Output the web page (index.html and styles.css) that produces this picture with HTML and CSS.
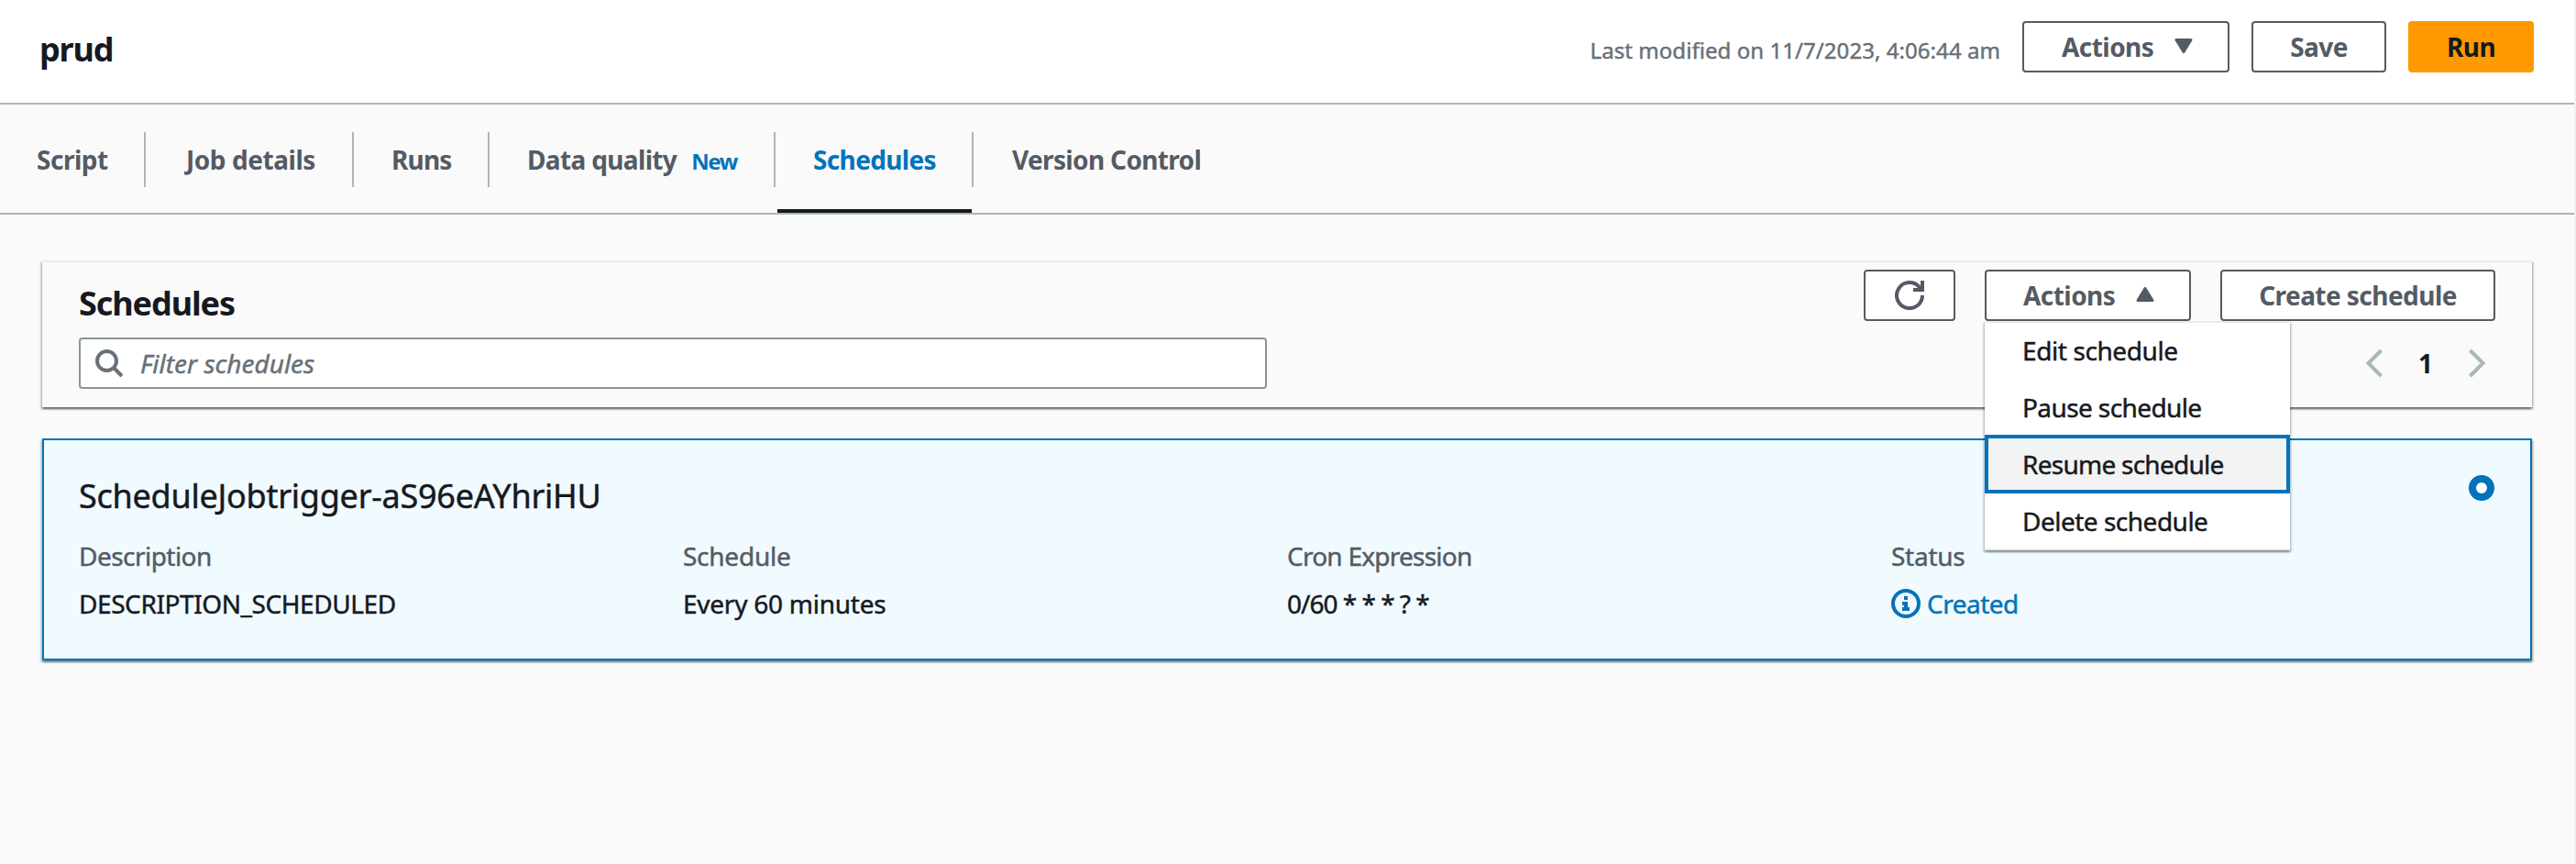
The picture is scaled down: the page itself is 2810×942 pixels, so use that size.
FILE: index.html
```
<!DOCTYPE html>
<html lang="en">
<head>
<meta charset="utf-8">
<title>prud - Schedules</title>
<link rel="stylesheet" href="styles.css">
</head>
<body>
<div class="page">
  <header class="header">
    <h1 class="job-name">prud</h1>
    <div class="header-actions">
      <span class="modified">Last modified on 11/7/2023, 4:06:44 am</span>
      <button class="btn btn-menu">Actions
        <svg class="caret" width="20" height="16" viewBox="0 0 20 16"><path d="M2 1.5H18L10 14.5Z" fill="currentColor" stroke="currentColor" stroke-width="3" stroke-linejoin="round"/></svg>
      </button>
      <button class="btn btn-save">Save</button>
      <button class="btn btn-primary">Run</button>
    </div>
  </header>

  <nav class="tabs">
    <a class="tab tab-script">Script</a>
    <a class="tab tab-details">Job details</a>
    <a class="tab tab-runs">Runs</a>
    <a class="tab tab-quality">Data quality<span class="new">New</span></a>
    <a class="tab tab-schedules active">Schedules</a>
    <a class="tab tab-version">Version Control</a>
  </nav>

  <main class="content">
    <section class="panel">
      <div class="panel-left">
        <h2 class="panel-title">Schedules</h2>
        <div class="search">
          <svg width="32" height="32" viewBox="0 0 32 32" fill="none" stroke="currentColor" stroke-width="4"><circle cx="13.5" cy="13.5" r="10.5"/><path d="M21 21L30 30"/></svg>
          <span>Filter schedules</span>
        </div>
      </div>
      <div class="panel-right">
        <div class="panel-buttons">
          <button class="btn btn-refresh" aria-label="Refresh">
            <svg width="32" height="32" viewBox="0 0 32 32" fill="none" stroke="currentColor" stroke-width="4"><path d="M30 16A14 14 0 1 1 26.5 6.8L29 10"/><path d="M30 0V10H20"/></svg>
          </button>
          <div class="menu-anchor">
            <button class="btn btn-menu">Actions
              <svg class="caret" width="20" height="16" viewBox="0 0 20 16"><path d="M10 1.5L18 14.5H2Z" fill="currentColor" stroke="currentColor" stroke-width="3" stroke-linejoin="round"/></svg>
            </button>
            <ul class="menu">
              <li class="menu-item edit">Edit schedule</li>
              <li class="menu-item">Pause schedule</li>
              <li class="menu-item focused">Resume schedule</li>
              <li class="menu-item">Delete schedule</li>
            </ul>
          </div>
          <button class="btn btn-create">Create schedule</button>
        </div>
        <div class="pager">
          <svg width="20" height="32" viewBox="0 0 20 32" fill="none" stroke="currentColor" stroke-width="4"><path d="M17.5 2L3.5 16L17.5 30"/></svg>
          <span class="page-number">1</span>
          <svg width="20" height="32" viewBox="0 0 20 32" fill="none" stroke="currentColor" stroke-width="4"><path d="M2.5 2L16.5 16L2.5 30"/></svg>
        </div>
      </div>
    </section>

    <section class="card">
      <div class="card-head">
        <h3 class="card-title">ScheduleJobtrigger-aS96eAYhriHU</h3>
        <span class="radio"></span>
      </div>
      <div class="fields">
        <div class="field"><div class="label label-description">Description</div><div class="value upper">DESCRIPTION_SCHEDULED</div></div>
        <div class="field"><div class="label">Schedule</div><div class="value">Every 60 minutes</div></div>
        <div class="field"><div class="label label-cron">Cron Expression</div><div class="value cron">0/60 * * * ? *</div></div>
        <div class="field"><div class="label">Status</div>
          <div class="value status">
            <svg width="32" height="32" viewBox="0 0 32 32"><circle cx="16" cy="16" r="14" fill="none" stroke="currentColor" stroke-width="4"/><path d="M14 8h4v4h-4zM12 14h6v6h2v4h-8v-4h2v-2h-2z" fill="currentColor"/></svg>
            <span>Created</span>
          </div>
        </div>
      </div>
    </section>
  </main>
</div>
</body>
</html>
```
FILE: styles.css
```
* { box-sizing: border-box; }
body {
  margin: 0;
  font-family: "Noto Sans", "Open Sans", sans-serif;
  font-size: 28px;
  color: #16191f;
  background: #fafafa;
}
h1, h2, h3, ul { margin: 0; padding: 0; }
svg { display: block; flex: none; }

.page {
  height: 942px;
  border-right: 2px solid #eff1f1;
}

/* Header */
.header {
  display: flex;
  justify-content: space-between;
  align-items: flex-start;
  height: 114px;
  padding: 23px 44px 0 43px;
  background: #fff;
  border-bottom: 2px solid #aab7b8;
}
.job-name {
  font-size: 36px;
  line-height: 61px;
  letter-spacing: -1.2px;
}
.header-actions { display: flex; }
.modified {
  margin-right: 24px;
  font-size: 24px;
  line-height: 63px;
  letter-spacing: 0.06px;
  color: #687078;
  white-space: nowrap;
}

/* Slightly thicker strokes for regular-weight text */
.modified, .search, .menu-item, .card-title, .label, .value {
  -webkit-text-stroke: 0.45px currentColor;
}

.btn {
  display: flex;
  align-items: center;
  justify-content: center;
  height: 56px;
  padding: 0;
  font: 700 28px/52px "Noto Sans", "Open Sans", sans-serif;
  letter-spacing: -0.55px;
  color: #545b64;
  background: #fff;
  border: 2px solid #545b64;
  border-radius: 4px;
}
.btn-menu {
  justify-content: space-between;
  width: 226px;
  padding: 0 38px 0 41px;
}
.btn-save { width: 147px; margin-left: 24px; }
.btn-primary {
  width: 137px;
  margin-left: 24px;
  color: #16191f;
  background: #f90;
  border-color: #f90;
}
.caret { position: relative; top: -1px; }

/* Tabs */
.tabs {
  display: flex;
  height: 120px;
  border-bottom: 2px solid #aab7b8;
}
.tab {
  position: relative;
  padding-left: 40px;
  font-weight: 700;
  line-height: 121px;
  letter-spacing: -0.65px;
  color: #545b64;
  white-space: nowrap;
}
.tab:not(:last-child)::after {
  content: "";
  position: absolute;
  right: 0;
  top: 30px;
  width: 2px;
  height: 60px;
  background: #aab7b8;
}
.tab-script { width: 159px; letter-spacing: -0.5px; }
.tab-details { width: 227px; padding-left: 44px; letter-spacing: -0.45px; }
.tab-runs { width: 148px; padding-left: 41px; letter-spacing: -0.8px; }
.tab-quality { width: 312px; padding-left: 41px; }
.tab-schedules { width: 216px; padding-left: 41px; }
.tab-version { padding-left: 42px; }
.new {
  margin-left: 16px;
  font-size: 24px;
  letter-spacing: -1.4px;
  color: #0073bb;
}
.active { color: #0073bb; }
.active::before {
  content: "";
  position: absolute;
  left: 2px;
  right: 2px;
  bottom: 0;
  height: 4px;
  background: #16191f;
}

/* Filter panel */
.content { padding: 50px 46px 0; }
.panel {
  display: flex;
  justify-content: space-between;
  height: 160px;
  padding: 8px 40px 20px;
  border-top: 2px solid #eaeded;
  box-shadow: 0 2px 2px rgba(0, 28, 36, 0.5), 2px 2px 2px rgba(0, 28, 36, 0.15), -2px 2px 2px rgba(0, 28, 36, 0.15);
}
.panel-title {
  padding-top: 13px;
  font-size: 36px;
  line-height: 48px;
  letter-spacing: -1.08px;
}
.search {
  display: flex;
  align-items: center;
  gap: 18px;
  width: 1296px;
  height: 56px;
  margin-top: 13px;
  padding-left: 15px;
  font-style: italic;
  line-height: 52px;
  color: #687078;
  background: #fff;
  border: 2px solid #879596;
  border-radius: 4px;
}
.panel-buttons { display: flex; }
.btn-refresh { width: 100px; margin-right: 32px; }
.btn-create { width: 300px; margin-left: 32px; }
.menu-anchor { position: relative; }
.menu-anchor .btn-menu { width: 225px; padding-left: 40px; }
.menu {
  position: absolute;
  top: 56px;
  left: 0;
  z-index: 2;
  width: 333px;
  height: 250px;
  list-style: none;
  background: #fff;
  border: solid #eaeded;
  border-width: 2px 0;
  box-shadow: 0 2px 2px rgba(0, 28, 36, 0.3), 2px 2px 2px rgba(0, 28, 36, 0.15), -2px 2px 2px rgba(0, 28, 36, 0.15);
}
.menu-item {
  height: 62px;
  padding-left: 41px;
  line-height: 61px;
  letter-spacing: -0.6px;
}
.menu-item.edit { letter-spacing: -0.4px; }
.menu-item.focused {
  height: 64px;
  margin: -2px 0 0;
  padding-left: 37px;
  line-height: 56px;
  letter-spacing: -0.74px;
  background: #f2f3f3;
  border: 4px solid #0073bb;
}
.menu-item:last-child { line-height: 60px; letter-spacing: -0.5px; }

.pager {
  display: flex;
  align-items: center;
  justify-content: flex-end;
  gap: 38px;
  height: 56px;
  margin-top: 18px;
  padding-right: 10px;
  color: #aab7b8;
}
.page-number {
  width: 16px;
  font-weight: 700;
  text-align: center;
  color: #16191f;
}

/* Schedule card */
.card {
  height: 242px;
  margin-top: 34px;
  padding: 38px 39px 0 38px;
  background: #f1faff;
  border: 2px solid #0073bb;
  box-shadow: 0 2px 2px rgba(0, 28, 36, 0.4), 2px 2px 2px rgba(0, 28, 36, 0.15), -2px 2px 2px rgba(0, 28, 36, 0.15);
}
.card-head {
  display: flex;
  justify-content: space-between;
}
.card-title {
  font-size: 36px;
  font-weight: 400;
  line-height: 45px;
  letter-spacing: -0.26px;
}
.radio {
  width: 28px;
  height: 28px;
  background: #fff;
  border: 8px solid #0073bb;
  border-radius: 50%;
}
.fields {
  display: grid;
  grid-template-columns: repeat(4, 659px);
  margin-top: 21px;
}
.label, .value { line-height: 44px; letter-spacing: -0.25px; }
.label { color: #545b64; }
.label-description { letter-spacing: -0.54px; }
.value { margin-top: 8px; }
.upper { letter-spacing: -0.42px; }
.label-cron { letter-spacing: -0.76px; }
.cron { letter-spacing: -1px; }
.status {
  display: flex;
  align-items: center;
  gap: 7px;
  letter-spacing: -0.5px;
  color: #0073bb;
}
```
